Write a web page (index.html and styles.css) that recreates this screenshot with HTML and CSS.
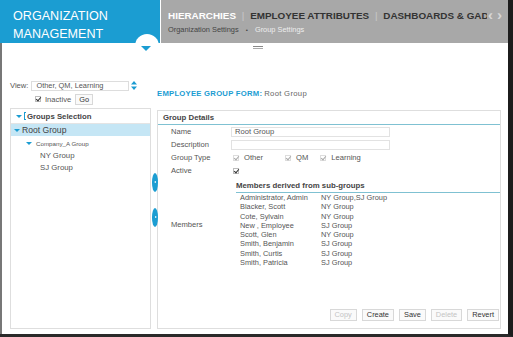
FILE: index.html
```html
<!DOCTYPE html>
<html lang="en">
<head>
    <meta charset="UTF-8">
    <title>Organization Management - Group Settings</title>
    <link rel="stylesheet" href="styles.css">
</head>
<body>
    <div class="app">
        <header class="header">
            <div class="brand">ORGANIZATION<br>MANAGEMENT</div>
            <nav class="nav">
                <div class="nav-row">
                    <div class="tabs">
                        <span class="tab active">HIERARCHIES</span>
                        <span class="sep">|</span>
                        <span class="tab">EMPLOYEE ATTRIBUTES</span>
                        <span class="sep">|</span>
                        <span class="tab">DASHBOARDS &amp; GADGETS</span>
                    </div>
                    <div class="arrows"><span>&lsaquo;</span><span>&rsaquo;</span></div>
                </div>
                <div class="crumbs">
                    <span>Organization Settings</span>
                    <span class="dot">&bull;</span>
                    <span class="current">Group Settings</span>
                </div>
            </nav>
            <div class="menu-knob"><span class="knob-arrow"></span></div>
            <div class="grip"></div>
        </header>

        <main class="main">
            <section class="left">
                <div class="view-row">
                    <span class="lbl">View:</span>
                    <span class="select-box">Other, QM, Learning</span>
                    <svg class="updown" width="6" height="9" viewBox="0 0 6 9">
                        <path d="M3 0 L6 3.5 H0 Z M3 9 L6 5.5 H0 Z" fill="#1b9bd1"/>
                    </svg>
                </div>
                <div class="inactive-row">
                    <span class="check on"></span>
                    <span class="lbl">Inactive</span>
                    <button class="btn small">Go</button>
                </div>
                <div class="panel tree-panel">
                    <div class="tree-head">
                        <span class="tri"></span>
                        <span class="bracket"></span>
                        <span>Groups Selection</span>
                    </div>
                    <div class="tree-row selected"><span class="tri"></span>Root Group</div>
                    <div class="tree-row lvl1"><span class="tri"></span>Company_A Group</div>
                    <div class="tree-row lvl2">NY Group</div>
                    <div class="tree-row lvl2">SJ Group</div>
                </div>
            </section>

            <section class="right">
                <h2 class="form-title">EMPLOYEE GROUP FORM:<span>Root Group</span></h2>
                <div class="panel details">
                    <div class="details-head">Group Details</div>
                    <div class="form">
                        <div class="form-row">
                            <span class="flabel">Name</span>
                            <span class="field">Root Group</span>
                        </div>
                        <div class="form-row">
                            <span class="flabel">Description</span>
                            <span class="field"></span>
                        </div>
                        <div class="form-row">
                            <span class="flabel">Group Type</span>
                            <span class="types">
                                <span class="check dim"></span><span>Other</span>
                                <span class="check dim"></span><span>QM</span>
                                <span class="check dim"></span><span>Learning</span>
                            </span>
                        </div>
                        <div class="form-row">
                            <span class="flabel">Active</span>
                            <span class="check on"></span>
                        </div>
                        <div class="members">
                            <span class="flabel">Members</span>
                            <div class="members-box">
                                <div class="members-head">Members derived from sub-groups</div>
                                <div class="members-list">
                                    <span>Administrator, Admin</span><span>NY Group,SJ Group</span>
                                    <span>Blacker, Scott</span><span>NY Group</span>
                                    <span>Cote, Sylvain</span><span>NY Group</span>
                                    <span>New , Employee</span><span>SJ Group</span>
                                    <span>Scott, Glen</span><span>NY Group</span>
                                    <span>Smith, Benjamin</span><span>SJ Group</span>
                                    <span>Smith, Curtis</span><span>SJ Group</span>
                                    <span>Smith, Patricia</span><span>SJ Group</span>
                                </div>
                            </div>
                        </div>
                    </div>
                    <div class="actions">
                        <button class="btn" disabled>Copy</button>
                        <button class="btn">Create</button>
                        <button class="btn">Save</button>
                        <button class="btn" disabled>Delete</button>
                        <button class="btn">Revert</button>
                    </div>
                </div>
            </section>

            <!-- collapse handles between the panels -->
            <span class="handle h-left"></span>
            <span class="handle h-right"></span>
        </main>
    </div>
</body>
</html>
```

FILE: styles.css
```css
* {
    margin: 0;
    padding: 0;
    box-sizing: border-box;
    font-family: "Liberation Sans", Arial, sans-serif;
}

body {
    background: white;
    color: #555;
}

.app {
    width: 513px;
    height: 337px;
    border-right: 5px solid #1c1c1c;
    border-bottom: 3px solid #2a2a2a;
    display: flex;
    flex-direction: column;
    overflow: hidden;
}

/* header */
.header {
    position: relative;
    display: flex;
    height: 43px;
    flex-shrink: 0;
}

.brand {
    width: 160px;
    background: #1b9dd2;
    color: white;
    font-size: 12.6px;
    line-height: 18px;
    padding: 7px 0 0 13px;
}

.nav {
    flex: 1;
    margin-left: 1px;
    background: #a8a8a8;
    padding: 8px 0 0 7px;
    overflow: hidden;
}

.nav-row {
    display: flex;
    align-items: center;
    height: 14px;
}

.tabs {
    width: 319px;
    overflow: hidden;
    white-space: nowrap;
    font-size: 9.9px;
    font-weight: bold;
    color: #333;
}

.tab.active {
    color: white;
}

.sep {
    color: #c8c8c8;
    font-weight: normal;
    margin: 0 3px 0 3px;
}

.arrows {
    display: flex;
    gap: 4px;
    color: #d6d6d6;
    font-size: 15px;
    font-weight: bold;
    line-height: 14px;
    margin-left: 1px;
}

.crumbs {
    margin-top: 3px;
    font-size: 7.4px;
    color: #444;
    white-space: nowrap;
}

.crumbs .dot {
    margin: 0 5px;
    font-size: 6px;
}

.crumbs .current {
    color: #eee;
}

.menu-knob {
    position: absolute;
    left: 135px;
    top: 34px;
    width: 24px;
    height: 24px;
    border-radius: 50%;
    background: white;
}

.knob-arrow {
    position: absolute;
    left: 6px;
    top: 12px;
    border-left: 5.5px solid transparent;
    border-right: 5.5px solid transparent;
    border-top: 5px solid #1b9dd2;
}

.grip {
    position: absolute;
    left: 253px;
    top: 46px;
    width: 10px;
    height: 3px;
    border-top: 1px solid #888;
    border-bottom: 1px solid #aaa;
}

/* main area */
.main {
    position: relative;
    flex: 1;
    border-left: 2px solid #777;
    display: grid;
    grid-template-columns: 141px 344px;
    column-gap: 6px;
    padding: 0 0 5px 8px;
}

.left,
.right {
    display: flex;
    flex-direction: column;
}

.lbl {
    font-size: 7.6px;
    color: #555;
}

.view-row {
    display: flex;
    align-items: center;
    gap: 3px;
    height: 11px;
    margin-top: 37px;
}

.select-box {
    width: 98px;
    height: 10px;
    border: 1px solid #ddd;
    font-size: 7.4px;
    line-height: 8px;
    padding: 0 4px;
    color: #555;
}

.updown {
    margin-left: -1px;
}

.inactive-row {
    display: flex;
    align-items: center;
    gap: 4px;
    margin: 2px 0 0 25px;
    height: 12px;
}

.check {
    display: inline-block;
    width: 6px;
    height: 6px;
    border: 1px solid #bbb;
    position: relative;
    flex-shrink: 0;
}

.check::after {
    content: "";
    position: absolute;
    left: 1px;
    top: -1px;
    width: 2px;
    height: 4px;
    border-right: 1.3px solid #333;
    border-bottom: 1.3px solid #333;
    transform: rotate(40deg);
}

.check.dim {
    border-color: #ddd;
}

.check.dim::after {
    border-color: #aaa;
}

.btn {
    font-size: 7.4px;
    color: #333;
    background: #fafafa;
    border: 1px solid #d8d8d8;
    height: 12px;
    padding: 0 4px;
    line-height: 10px;
}

.btn.small {
    height: 11px;
    padding: 0 3px;
}

.btn:disabled {
    color: #c4c4c4;
}

/* panels */
.panel {
    border: 1px solid #dedede;
    flex: 1;
}

.tree-panel {
    margin-top: 3px;
}

.tree-head {
    display: flex;
    align-items: center;
    height: 15px;
    padding-left: 5px;
    font-size: 7.8px;
    font-weight: bold;
    color: #444;
    border-bottom: 1px solid #e4e4e4;
}

.tri {
    display: inline-block;
    border-left: 3px solid transparent;
    border-right: 3px solid transparent;
    border-top: 3px solid #1b9dd2;
    margin-right: 2px;
}

.bracket {
    width: 2px;
    height: 8px;
    border: 1px solid #1b9dd2;
    border-right: none;
    margin-right: 1px;
}

.tree-row {
    display: flex;
    align-items: center;
    height: 12px;
    font-size: 8.2px;
    color: #555;
    padding-left: 3px;
}

.tree-row.selected {
    background: #c5e6f5;
    color: #444;
    font-size: 8.6px;
    height: 12px;
}

.tree-row.selected .tri {
    margin-right: 2px;
}

.tree-row.lvl1 {
    padding-left: 15px;
    font-size: 6.2px;
    margin-top: 1px;
}

.tree-row.lvl1 .tri {
    margin-right: 4px;
}

.tree-row.lvl2 {
    padding-left: 29px;
    font-size: 7.8px;
}

.form-title {
    margin-top: 46px;
    height: 10px;
    font-size: 7.7px;
    line-height: 10px;
    font-weight: bold;
    letter-spacing: 0.25px;
    color: #1b9dd2;
    white-space: nowrap;
}

.form-title span {
    font-weight: normal;
    color: #666;
    letter-spacing: 0.3px;
    margin-left: 2px;
}

.details {
    margin-top: 11px;
    display: flex;
    flex-direction: column;
}

.details-head {
    height: 14px;
    line-height: 13px;
    padding-left: 5px;
    font-size: 7.8px;
    font-weight: bold;
    color: #444;
    border-bottom: 1px solid #7fc1d2;
}

.form {
    padding-left: 13px;
}

.form-row {
    display: flex;
    align-items: center;
    height: 13px;
}

.flabel {
    width: 60px;
    flex-shrink: 0;
    font-size: 7.6px;
    color: #555;
}

.field {
    width: 159px;
    height: 10px;
    border: 1px solid #e2e2e2;
    font-size: 7.6px;
    line-height: 8px;
    padding-left: 3px;
    color: #555;
}

.types {
    display: flex;
    align-items: center;
    font-size: 7.6px;
    margin-left: 2px;
}

.types .check {
    margin-right: 5px;
}

.types span:nth-child(2) {
    margin-right: 22px;
}

.types span:nth-child(4) {
    margin-right: 12px;
}

.form-row .check.on {
    margin-left: 2px;
}

.members {
    display: flex;
    align-items: center;
    padding-top: 1px;
}

.members .flabel {
    padding-top: 3px;
}

.members-box {
    flex: 1;
    padding-left: 5px;
}

.members-head {
    height: 15px;
    line-height: 12px;
    padding-top: 2px;
    font-size: 7.8px;
    font-weight: bold;
    color: #444;
    border-bottom: 1px solid #7fc1d2;
}

.members-list {
    display: grid;
    grid-template-columns: 81px 1fr;
    padding-left: 4px;
    font-size: 7.4px;
    line-height: 9.3px;
    color: #555;
}

.actions {
    margin-top: auto;
    display: flex;
    justify-content: flex-end;
    gap: 5px;
    padding: 0 1px 7px 0;
}

.handle {
    position: absolute;
    left: 150px;
    width: 6px;
    height: 19px;
    border-radius: 50%;
    background: #1b9dd2;
}

.handle::after {
    content: "";
    position: absolute;
    top: 8px;
    border-top: 1.5px solid transparent;
    border-bottom: 1.5px solid transparent;
}

.h-left {
    top: 130px;
}

.h-left::after {
    left: 1.5px;
    border-right: 2px solid white;
}

.h-right {
    top: 165px;
}

.h-right::after {
    left: 2.5px;
    border-left: 2px solid white;
}
```
